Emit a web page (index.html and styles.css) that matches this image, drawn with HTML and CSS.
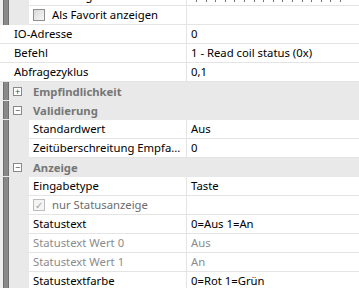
FILE: index.html
```html
<!DOCTYPE html>
<html lang="de">

<head>
    <meta charset="UTF-8">
    <title>Eigenschaften</title>
    <link rel="stylesheet" href="styles.css">
</head>

<body>
    <div class="grid">
        <div class="row nested cut">
            <div class="label">Zuordnung</div>
            <div class="value"><div class="dots"></div></div>
        </div>
        <div class="row nested">
            <div class="label check-label"><span class="box"></span>Als Favorit anzeigen</div>
            <div class="value"></div>
        </div>
        <div class="row top">
            <div class="label">IO-Adresse</div>
            <div class="value">0</div>
        </div>
        <div class="row top">
            <div class="label">Befehl</div>
            <div class="value">1 - Read coil status (0x)</div>
        </div>
        <div class="row top">
            <div class="label">Abfragezyklus</div>
            <div class="value">0,1</div>
        </div>

        <div class="cat"><span class="toggle">+</span>Empfindlichkeit</div>

        <div class="cat"><span class="toggle">&minus;</span>Validierung</div>
        <div class="row nested">
            <div class="label">Standardwert</div>
            <div class="value">Aus</div>
        </div>
        <div class="row nested">
            <div class="label">Zeitüberschreitung Empfa...</div>
            <div class="value">0</div>
        </div>

        <div class="cat"><span class="toggle">&minus;</span>Anzeige</div>
        <div class="row nested">
            <div class="label">Eingabetype</div>
            <div class="value">Taste</div>
        </div>
        <div class="row nested">
            <div class="label check-label disabled-check"><span class="box checked">&#10003;</span>nur Statusanzeige</div>
            <div class="value"></div>
        </div>
        <div class="row nested">
            <div class="label">Statustext</div>
            <div class="value">0=Aus 1=An</div>
        </div>
        <div class="row nested off">
            <div class="label">Statustext Wert 0</div>
            <div class="value">Aus</div>
        </div>
        <div class="row nested off">
            <div class="label">Statustext Wert 1</div>
            <div class="value">An</div>
        </div>
        <div class="row nested">
            <div class="label">Statustextfarbe</div>
            <div class="value">0=Rot 1=Grün</div>
        </div>
    </div>
</body>

</html>
```

FILE: styles.css
```css
body {
    margin: 0;
    background: #ffffff;
    font-family: "Noto Sans", Arial, sans-serif;
    font-size: 11.3px;
    color: #000;
    overflow: hidden;
}

.grid {
    width: 359px;
    margin-top: -13px;
    background: linear-gradient(to right, #efefef 0 3px, #6f6f6f 3px 4px, #8a8a8a 4px 8px, #6f6f6f 8px 9px, #e9e9e9 9px);
}

.row {
    display: grid;
    height: 18px;
    line-height: 18px;
    border-bottom: 1px solid #e4e4e4;
    white-space: nowrap;
    background: #fff;
}

.row.nested {
    margin-left: 29px;
    grid-template-columns: 158px 1fr;
}

.row.top {
    grid-template-columns: 187px 1fr;
}

.label {
    padding-left: 4px;
    overflow: hidden;
    border-right: 1px solid #e4e4e4;
}

.row.top .label {
    padding-left: 14px;
}

.value {
    padding-left: 4px;
    overflow: hidden;
}

.dots {
    width: 145px;
    height: 2px;
    margin: 13px 0 0 5px;
    background: repeating-linear-gradient(to right, #7a7a7a 0 1px, transparent 1px 9.6px);
}

.off {
    color: #8c8c8c;
}

.check-label {
    display: flex;
    align-items: center;
}

.box {
    box-sizing: border-box;
    width: 12px;
    height: 12px;
    border: 1px solid #8f8f8f;
    background: linear-gradient(135deg, #d9d9d9, #f7f7f7);
    margin-right: 7px;
    font-size: 10px;
    line-height: 10px;
    text-align: center;
    color: #a6a6a6;
}

.disabled-check {
    color: #6d6d6d;
}

.box.checked {
    border-color: #bdbdbd;
    background: #f4f4f4;
}

.cat {
    display: flex;
    align-items: center;
    height: 18px;
    border-bottom: 1px solid #e9e9e9;
    font-weight: bold;
    color: #767676;
    padding-left: 13px;
}

.toggle {
    width: 7px;
    height: 7px;
    border: 1px solid #8a8a8a;
    background: #fff;
    margin-right: 11px;
    font-size: 9px;
    line-height: 7px;
    text-align: center;
    color: #444;
    font-weight: normal;
}
```
